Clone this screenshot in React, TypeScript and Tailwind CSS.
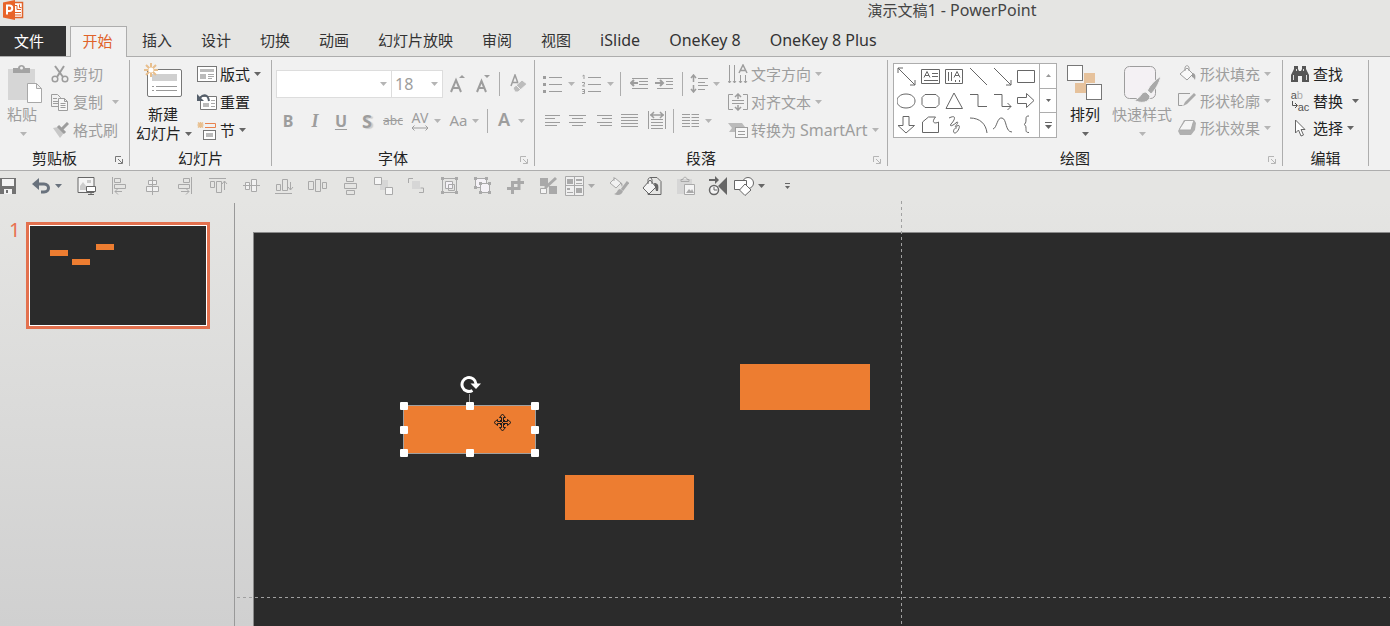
import type { ReactNode } from 'react'
import clsx from 'clsx'

type IconProps = { w: number; h: number; children: ReactNode; className?: string }

function Icon({ w, h, children, className }: IconProps) {
  return (
    <svg
      width={w}
      height={h}
      viewBox={`0 0 ${w} ${h}`}
      fill="none"
      stroke="currentColor"
      className={clsx('shrink-0', className)}
      aria-hidden="true"
    >
      {children}
    </svg>
  )
}

function Caret({ className }: { className?: string }) {
  return (
    <Icon w={7} h={4} className={className}>
      <path d="M0 0h7L3.5 4z" fill="currentColor" stroke="none" />
    </Icon>
  )
}

function Group({
  label,
  launcher,
  className,
  inset,
  children,
}: {
  label: string
  launcher?: 'on' | 'off'
  className: string
  inset: string
  children: ReactNode
}) {
  return (
    <section
      aria-label={label}
      className={clsx('flex shrink-0 flex-col border-r border-[#adadad]', className)}
    >
      <div className={clsx('flex flex-1', inset)}>{children}</div>
      <div className="flex h-4 items-center">
        <span className="flex-1 text-center text-[#222]">{label}</span>
        {launcher && (
          <button
            aria-label={label + '设置'}
            className={clsx(
              'flex w-5 justify-center pt-1',
              launcher === 'on' ? 'text-[#777]' : 'text-[#b5b5b5]',
            )}
          >
            <Icon w={8} h={8}>
              <path d="M.5 6V.5H6M3 3l4 4M7.5 3v4.5H3" />
            </Icon>
          </button>
        )}
      </div>
    </section>
  )
}

function RowButton({
  icon,
  label,
  caret,
  active,
  className,
}: {
  icon: ReactNode
  label: ReactNode
  caret?: 'near' | 'far'
  active?: boolean
  className: string
}) {
  return (
    <button
      className={clsx(
        'flex items-center whitespace-nowrap',
        active ? 'text-[#222]' : 'text-[#9d9d9d]',
        className,
      )}
    >
      <span className="flex w-5 justify-center">{icon}</span>
      <span className="pl-[3px]">{label}</span>
      {caret && (
        <Caret
          className={clsx(
            caret === 'near' ? 'ml-1' : 'ml-[9px]',
            active ? 'text-[#666]' : 'text-[#b5b5b5]',
          )}
        />
      )}
    </button>
  )
}

function Divider() {
  return <span className="h-6 w-px bg-[#adadad]" />
}

const tabs = ['插入', '设计', '切换', '动画', '幻灯片放映', '审阅', '视图']
const addInTabs = ['iSlide', 'OneKey 8', 'OneKey 8 Plus']

function TitleBar() {
  return (
    <header className="flex h-[26px] items-start">
      <Icon w={24} h={21} className="ml-[2px]">
        <rect x="10" y="2.5" width="10.5" height="15" fill="#fff" stroke="#e0622a" strokeWidth="1.5" />
        <path d="M13 5.5h2v4h4M13 12.5h6M13 15h6M17.5 4.5v3h2" stroke="#e0622a" />
        <path d="M1 2.5L13 0v20L1 17.5z" fill="#e8642a" stroke="none" />
        <path d="M5 14.5v-9h2.5a2.5 2.5 0 0 1 0 5.5H5" stroke="#fff" strokeWidth="2" />
      </Icon>
      <h1 className="ml-[496px] flex-1 pr-2 text-center text-[#444] max-lg:ml-0">
        演示文稿<span className="text-base leading-5">1 - PowerPoint</span>
      </h1>
    </header>
  )
}

function TabBar() {
  return (
    <nav className="flex h-[31px] border-b border-[#adadad]">
      <a href="#file" className="mr-1 flex w-[66px] items-center bg-[#333] pb-px pl-[14px] text-white">
        文件
      </a>
      <a
        href="#home"
        className="-mb-px flex w-[57px] items-center justify-center border border-b-0 border-[#adadad] bg-[#f1f1f1] pb-[3px] pr-[2px] text-[#e0622a]"
      >
        开始
      </a>
      <div className="ml-[15px] flex items-center gap-[29px] whitespace-nowrap pb-[2px] text-[#333]">
        {tabs.map((tab) => (
          <a key={tab} href={'#' + tab}>
            {tab}
          </a>
        ))}
        {addInTabs.map((tab) => (
          <a key={tab} href={'#' + tab} className="text-base leading-5">
            {tab}
          </a>
        ))}
      </div>
    </nav>
  )
}

function ClipboardGroup() {
  return (
    <Group label="剪贴板" launcher="on" className="w-[130px]" inset="pl-[7px]">
      <button className="flex w-[35px] flex-col items-start pt-[5px] text-[#9d9d9d]">
        <Icon w={35} h={39}>
          <path d="M1 4h27v31H1z" fill="#d6d6d6" stroke="none" />
          <path d="M6 3h5c0-4 7-4 7 0h5v5H6z" fill="#a3a3a3" stroke="none" />
          <circle cx="14.5" cy="3" r="1.5" fill="#f1f1f1" stroke="none" />
          <path d="M20.5 18.5h9l5 5v14h-14zM29.5 18.5v5h5" fill="#fff" stroke="#a8a8a8" />
        </Icon>
        <span className="leading-5">粘贴</span>
        <Caret className="ml-[13px] mt-2 text-[#b5b5b5]" />
      </button>
      <div className="ml-2 flex flex-col">
        <RowButton
          className="h-7"
          label="剪切"
          icon={
            <Icon w={18} h={18}>
              <path d="M4 1l8 11M13 1L6 12" strokeWidth="2" />
              <circle cx="4" cy="14" r="2.8" strokeWidth="1.5" />
              <circle cx="14" cy="14" r="2.8" strokeWidth="1.5" />
            </Icon>
          }
        />
        <RowButton
          className="h-7"
          label="复制"
          caret="far"
          icon={
            <Icon w={18} h={18}>
              <path d="M.5 1.5h6l3 3v9h-9zM2 5.5h4M2 8.5h5M2 10.5h5" />
              <path d="M7.5 5.5h6l3 3v9h-9zM13.5 5.5v3h3M9.5 10.5h5M9.5 12.5h5M9.5 14.5h5" fill="#f7f7f7" />
            </Icon>
          }
        />
        <RowButton
          className="h-7"
          label="格式刷"
          icon={
            <Icon w={17} h={16}>
              <path d="M1 6l5-1 6 6-4 5z" fill="#c8c8c8" stroke="none" />
              <path d="M6 4l7 7M10 7l6-6" strokeWidth="3" />
            </Icon>
          }
        />
      </div>
    </Group>
  )
}

function SlidesGroup() {
  return (
    <Group label="幻灯片" className="w-[142px]" inset="pl-[6px]">
      <button className="flex w-[57px] flex-col items-start pt-[2px] text-[#222]">
        <Icon w={40} h={37} className="ml-[7px]">
          <rect x="4.5" y="7.5" width="34" height="27" rx="1.5" fill="#fff" stroke="#777" />
          <path d="M9 12h25v7H9z" fill="#d0d0d0" stroke="none" />
          <path d="M9 24.5h2M13 24.5h21M9 28.5h2M13 28.5h21" stroke="#999" />
          <path d="M8 1v14M1 8h14M3 3l10 10M13 3L3 13" stroke="#e8bf8e" strokeWidth="2" />
          <circle cx="8" cy="8" r="2.5" fill="#fff" stroke="none" />
        </Icon>
        <span className="mt-[6px] pl-3 leading-[19px]">新建</span>
        <span className="flex items-center whitespace-nowrap leading-[19px]">
          幻灯片
          <Caret className="ml-1 text-[#666]" />
        </span>
      </button>
      <div className="ml-1 flex flex-col">
        <RowButton
          active
          className="h-7"
          label="版式"
          caret="near"
          icon={
            <Icon w={20} h={16} className="text-[#777]">
              <rect x=".5" y=".5" width="19" height="15" fill="#fff" />
              <path d="M3 3h14v3H3zM3 8h6v5H3z" fill="#bbb" stroke="none" />
              <path d="M11 8.5h6M11 10.5h6M11 12.5h4" stroke="#aaa" />
            </Icon>
          }
        />
        <RowButton
          active
          className="h-7"
          label="重置"
          icon={
            <Icon w={20} h={18} className="text-[#777]">
              <path d="M3.5 3.5h16v13h-16z" fill="#fff" />
              <path d="M6 10h6v4H6z" fill="#bbb" stroke="none" />
              <path d="M14 7.5h4M14 10.5h4M14 13.5h4" stroke="#aaa" />
              <path d="M3 5c4-5 8-3 9 3" stroke="#555f6b" strokeWidth="2" />
              <path d="M0 1v7h7z" fill="#555f6b" stroke="none" />
            </Icon>
          }
        />
        <RowButton
          active
          className="h-7"
          label="节"
          caret="near"
          icon={
            <Icon w={20} h={19}>
              <path d="M3.5 1v6M.5 4h6M1 1.5l5 5M6 1.5l-5 5" stroke="#e8bf8e" strokeWidth="1.5" />
              <path d="M8 2.5h10.500v4H8" stroke="#e8834f" />
              <rect x="6.5" y="9.5" width="12" height="9" fill="#fff" stroke="#777" />
              <path d="M9 12h7v4H9z" fill="#bbb" stroke="none" />
            </Icon>
          }
        />
      </div>
    </Group>
  )
}

function FontGroup() {
  return (
    <Group label="字体" launcher="off" className="w-[263px]" inset="pl-1 pt-[5px]">
      <div className="flex flex-col text-[#9d9d9d]">
        <div className="flex h-[37px] items-center">
          <div className="flex h-7 w-[116px] items-center border border-[#ddd] bg-white">
            <input aria-label="字体名称" className="w-full min-w-0 flex-1 bg-transparent pl-1 outline-none" />
            <Caret className="mr-1 text-[#b5b5b5]" />
          </div>
          <div className="-ml-px flex h-7 w-[52px] items-center border border-[#ddd] bg-white">
            <input
              aria-label="字号"
              defaultValue="18"
              className="w-full min-w-0 flex-1 bg-transparent pl-[3px] text-base outline-none"
            />
            <Caret className="mr-1 text-[#b5b5b5]" />
          </div>
          <button aria-label="增大字号" className="ml-[7px]">
            <Icon w={16} h={18}>
              <path d="M1 17L6 5l5 12M3 13h6" strokeWidth="2" />
              <path d="M9 3h6l-3-3z" fill="currentColor" stroke="none" />
            </Icon>
          </button>
          <button aria-label="减小字号" className="ml-[10px] mr-2">
            <Icon w={15} h={18}>
              <path d="M1 17L5.5 6 10 17M2.5 13h6" strokeWidth="2" />
              <path d="M8 0h6l-3 3z" fill="currentColor" stroke="none" />
            </Icon>
          </button>
          <Divider />
          <button aria-label="清除格式" className="ml-[10px]">
            <Icon w={17} h={19}>
              <path d="M1 12L5 1l4 11M2.5 8.500h5" strokeWidth="1.5" />
              <path d="M3 14l9-8 5 4-9 8H5z" fill="#bcbcbc" stroke="#f1f1f1" />
              <path d="M6 11l5 5" stroke="#f1f1f1" />
            </Icon>
          </button>
        </div>
        <div className="flex h-[37px] items-center text-base">
          <button className="w-6 font-bold">B</button>
          <button className="ml-[2px] w-[26px] font-['Liberation_Serif',serif] text-lg font-bold italic">I</button>
          <button className="w-[26px] font-bold underline underline-offset-2">U</button>
          <button className="w-[26px] text-lg font-bold [text-shadow:2px_1px_1px_#ccc]">S</button>
          <button className="w-[26px] text-xs line-through">abc</button>
          <button className="flex w-[39px] items-center justify-center gap-1">
            <span className="flex w-[20px] flex-col items-center">
              <span className="text-sm leading-[14px]">AV</span>
              <Icon w={18} h={6}>
                <path d="M1 3h16M3.5 .5L1 3l2.5 2.5M14.5 .5L17 3l-2.5 2.500" />
              </Icon>
            </span>
            <Caret className="text-[#b5b5b5]" />
          </button>
          <button className="flex w-[38px] items-center justify-center gap-1 text-[15px]">
            Aa
            <Caret className="text-[#b5b5b5]" />
          </button>
          <span className="ml-1" />
          <Divider />
          <button className="ml-[10px] flex items-center gap-2">
            <span className="pb-1 text-lg font-semibold leading-6">A</span>
            <Caret className="text-[#b5b5b5]" />
          </button>
        </div>
      </div>
    </Group>
  )
}

function ParagraphGroup() {
  return (
    <Group label="段落" launcher="off" className="w-[353px]" inset="pl-2">
      <div className="flex w-[185px] flex-col pt-[5px] text-[#9d9d9d]">
        <div className="flex h-[37px] items-center">
          <button aria-label="项目符号" className="flex w-[39px] items-center gap-[6px]">
            <Icon w={19} h={18}>
              <path d="M6 2.5h13M6 9.5h13M6 16.5h13" />
              <path d="M0 2.5h3M0 9.5h3M0 16.5h3" strokeWidth="3" />
            </Icon>
            <Caret className="text-[#b5b5b5]" />
          </button>
          <button aria-label="编号" className="flex w-[38px] items-center gap-[6px]">
            <Icon w={19} h={20}>
              <path d="M6 3.5h13M6 10.5h13M6 17.5h13" />
              <path d="M.5 2L2 1v4M0 8.5h2.5V10L.5 12H3M0 15.5h2.5v4H0M.5 17.5h2" />
            </Icon>
            <Caret className="text-[#b5b5b5]" />
          </button>
          <Divider />
          <button aria-label="减少缩进" className="ml-[9px] w-[25px]">
            <Icon w={18} h={13}>
              <path d="M2 1.5h16M9 4.5h9M9 7.5h9M2 11.5h16" />
              <path d="M8 6H1M4 3L1 6l3 3" strokeWidth="2" />
            </Icon>
          </button>
          <button aria-label="增加缩进" className="w-[27px]">
            <Icon w={19} h={13}>
              <path d="M2 1.5h16M11 4.5h7M11 7.5h7M2 11.5h16" />
              <path d="M0 6h8M5 3l3 3-3 3" strokeWidth="2" />
            </Icon>
          </button>
          <Divider />
          <button aria-label="行距" className="ml-[7px] flex items-center gap-[5px]">
            <Icon w={18} h={19}>
              <path d="M8 4.5h10M8 8.5h7M8 11.5h10M8 15.5h7" />
              <path d="M3.5 1v7M1 4l2.5-3L6 4M3.5 11v7M1 15l2.5 3L6 15" strokeWidth="1.5" />
            </Icon>
            <Caret className="text-[#b5b5b5]" />
          </button>
        </div>
        <div className="flex h-[37px] items-center">
          <button aria-label="左对齐" className="w-[26px] pl-[2px]">
            <Icon w={15} h={12}>
              <path d="M0 .5h15M0 3.5h10M0 7.5h15M0 10.5h12" />
            </Icon>
          </button>
          <button aria-label="居中" className="w-[26px]">
            <Icon w={17} h={12}>
              <path d="M0 .5h17M3 3.5h11M0 7.5h17M3 10.5h11" />
            </Icon>
          </button>
          <button aria-label="右对齐" className="w-[26px] pl-[2px]">
            <Icon w={15} h={12}>
              <path d="M0 .5h15M5 3.5h10M0 7.5h15M3 10.5h12" />
            </Icon>
          </button>
          <button aria-label="两端对齐" className="w-[27px]">
            <Icon w={17} h={13}>
              <path d="M0 .5h17M0 3.5h17M0 6.5h17M0 9.5h17M0 12.5h17" />
            </Icon>
          </button>
          <button aria-label="分散对齐" className="w-[25px]">
            <Icon w={18} h={19}>
              <path d="M.5 0v18M17.5 0v18M3 8.5h12M3 11.5h12M3 14.5h12M3 17.5h12" />
              <path d="M2 4h14M6 1L3 4l3 3M12 1l3 3-3 3" strokeWidth="1.5" />
            </Icon>
          </button>
          <Divider />
          <button aria-label="分栏" className="ml-2 flex items-center gap-[6px]">
            <Icon w={17} h={13}>
              <path d="M0 .5h8M9.5 .5H17M0 3.5h8M9.5 3.5H17M0 6.5h8M9.5 6.5H17M0 9.5h8M9.5 9.5H17M0 12.5h8M9.5 12.5H17" />
            </Icon>
            <Caret className="text-[#b5b5b5]" />
          </button>
        </div>
      </div>
      <div className="flex flex-col">
        <RowButton
          className="h-7"
          label="文字方向"
          caret="near"
          icon={
            <Icon w={20} h={20}>
              <path d="M1.5 1v18M6.5 1v18M12.5 11v8M17.5 11v8M0 17l1.5 2L3 17M5 17l1.5 2L8 17M11 17l1.5 2 1.5-2M16 17l1.5 2 1.5-2" />
              <path d="M11 9l4-8 4 8M12 6.5h6" strokeWidth="1.5" />
            </Icon>
          }
        />
        <RowButton
          className="h-7"
          label="对齐文本"
          caret="near"
          icon={
            <Icon w={20} h={18}>
              <path d="M5 1.5H.5v15H5M15 1.5h4.5v15H15M4 7.5h12M4 10.5h12" />
              <path d="M10 1v5M7 4l3-3 3 3M10 12v5M7 14l3 3 3-3" strokeWidth="1.5" />
            </Icon>
          }
        />
        <RowButton
          className="h-7"
          label={
            <>
              转换为 <span className="text-base leading-5">SmartArt</span>
            </>
          }
          caret="near"
          icon={
            <Icon w={20} h={16}>
              <path d="M0 1h14l3 4H8v5H1l3-4z" fill="#bbb" stroke="none" />
              <rect x="7.5" y="5.5" width="12" height="10" fill="#f7f7f7" />
              <path d="M10 9.5h7M10 12.5h7" />
            </Icon>
          }
        />
      </div>
    </Group>
  )
}

const shapes = [
  'M1 1l17 17M1 6V1h5M18 13v5h-5',
  'M.5 2.5h18v14H.5zM3 10.5l3-6 3 6M4 8.5h4M11 6.5h6M11 9.5h6M3 13.5h14',
  'M.5 2.5h17v14H.5zM3.5 5v9M6.5 5v9M9 10.5l3-6 3 6M10 8.5h4M10.5 13v2M14.5 13v2',
  'M1 1l17 17',
  'M1 1l17 17M18 13v5h-5',
  'M.5 3.5h17v12H.5z',
  'M9 3c12 0 12 14 0 14S-3 3 9 3z',
  'M4 3.5h11l3 3v7l-3 3H4l-3-3v-7z',
  'M9 2l8.5 15.5H1z',
  'M1 3.5h8v12h9',
  'M1 3.5h8v12h9M14.5 12l3.5 3.5-3.5 3.5',
  'M.5 6.5h9v-4l7.5 7-7.5 7v-4h-9z',
  'M6 1.5h6v9h5.5L9 18l-8-7.5h5z',
  'M1.5 17.5V7l6-5h7c-5 6 0 7 3 5v10.500z',
  'M4 3c8-4 6 2 2 6-2 3 2 2 6-2 3 0-5 7 0 4s1 7-2 7-1-6 2-5',
  'M1 3c10 0 16 6 17 15',
  'M0 14c4-1 4-12 9-11s3 14 10 14',
  'M12 1c-3 0-3 1-3 4s-1 4-2 4.5c1 .5 2 1 2 4s0 4 3 4',
]

function LargeCommand({
  icon,
  label,
  active,
  className,
}: {
  icon: ReactNode
  label: string
  active?: boolean
  className: string
}) {
  return (
    <button
      className={clsx(
        'flex flex-col items-center whitespace-nowrap pt-[5px]',
        active ? 'text-[#222]' : 'text-[#9d9d9d]',
        className,
      )}
    >
      {icon}
      <span className="leading-5">{label}</span>
      <Caret className={clsx('mt-2', active ? 'text-[#666]' : 'text-[#b5b5b5]')} />
    </button>
  )
}

function DrawingGroup() {
  return (
    <Group label="绘图" launcher="off" className="w-[395px]" inset="pl-[5px]">
      <div className="mt-[3px] flex h-[75px] w-[164px] shrink-0 border border-[#adadad] bg-white text-[#666]">
        <div className="grid flex-1 grid-cols-6 place-items-center">
          {shapes.map((d, i) => (
            <button key={i} aria-label={`形状 ${i + 1}`}>
              <Icon w={19} h={19}>
                <path d={d} />
              </Icon>
            </button>
          ))}
        </div>
        <div className="flex w-[17px] flex-col divide-y divide-[#adadad] border-l border-[#adadad]">
          <button aria-label="上一行" className="flex flex-1 items-center justify-center">
            <Icon w={5} h={3} className="text-[#999]">
              <path d="M0 3h5L2.5 0z" fill="currentColor" stroke="none" />
            </Icon>
          </button>
          <button aria-label="下一行" className="flex flex-1 items-center justify-center">
            <Icon w={5} h={3}>
              <path d="M0 0h5L2.5 3z" fill="currentColor" stroke="none" />
            </Icon>
          </button>
          <button aria-label="其他" className="flex flex-1 items-center justify-center">
            <Icon w={7} h={7}>
              <path d="M0 .5h7" />
              <path d="M0 3h7L3.5 7z" fill="currentColor" stroke="none" />
            </Icon>
          </button>
        </div>
      </div>
      <LargeCommand
        active
        className="ml-2 w-[40px]"
        label="排列"
        icon={
          <Icon w={36} h={39}>
            <path d="M17 8h11v10H17zM8 18h11v10H8z" fill="#e6c29c" stroke="none" />
            <rect x=".5" y=".5" width="15" height="15" fill="#fff" stroke="#777" />
            <rect x="19.5" y="19.5" width="15" height="15" fill="#fff" stroke="#777" />
          </Icon>
        }
      />
      <LargeCommand
        className="ml-1 w-[66px]"
        label="快速样式"
        icon={
          <Icon w={38} h={39}>
            <rect x="1.5" y="1.5" width="31" height="32" rx="5" fill="#f4f1f4" />
            <path
              d="M38 11c-6 4-11 9-14 15l4 3c4-4 8-10 10-18zM23 27c-6 0-4 6-12 8 6 4 16 3 16-4z"
              fill="#a9a9a9"
              stroke="#f1f1f1"
            />
            <path d="M22 24l7 7" stroke="#f1f1f1" strokeWidth="2" />
          </Icon>
        }
      />
      <div className="ml-[2px] flex flex-col">
        <RowButton
          className="h-[27px]"
          label="形状填充"
          caret="near"
          icon={
            <Icon w={18} h={18}>
              <path d="M2 9l7-6 6 6-6 6zM7 6V3c0-3 4-3 4 0v3" fill="#f9f9f9" />
              <path d="M14 8c3 0 4 2 3 7-1-2-2-3-3-3z" fill="currentColor" stroke="none" />
            </Icon>
          }
        />
        <RowButton
          className="h-[27px]"
          label="形状轮廓"
          caret="near"
          icon={
            <Icon w={20} h={17}>
              <path d="M13 1.5H1.5v12h4" />
              <path d="M6 14l2-4 9-9 2 2-9 9z" fill="#aaa" stroke="none" />
            </Icon>
          }
        />
        <RowButton
          className="h-[27px]"
          label="形状效果"
          caret="near"
          icon={
            <Icon w={19} h={17}>
              <path d="M6 1h10l2 3-1 7-4 5H2L0 12z" fill="#b0b0b0" stroke="none" />
              <path d="M7 1.5h7.5q1 0 1 1L13 11H2.5q-1 0-1-1z" fill="#f5f5f5" stroke="#aaa" />
            </Icon>
          }
        />
      </div>
    </Group>
  )
}

function EditingGroup() {
  return (
    <Group label="编辑" className="w-[86px]" inset="pl-[7px]">
      <div className="flex flex-col">
        <RowButton
          active
          className="h-[27px]"
          label="查找"
          icon={
            <Icon w={18} h={17} className="text-[#555]">
              <path d="M3 1h4v3l1 2h2l1-2V1h4v3l3 6v7h-7v-6H7v6H0v-7l3-6z" fill="currentColor" stroke="none" />
              <path d="M2.5 10v5M5.5 4v2M12.5 4v2M15.5 10v5" stroke="#ddd" />
            </Icon>
          }
        />
        <RowButton
          active
          className="h-[27px]"
          label="替换"
          caret="far"
          icon={
            <span className="flex flex-col text-left font-['Liberation_Sans',sans-serif] text-[11px] leading-3 text-[#555]">
              <span>
                a<span className="text-[#aaa]">b</span>
              </span>
              <span className="flex">
                <Icon w={7} h={8}>
                  <path d="M1.5 0v4.5H6M4 2l2.5 2.5L4 7" />
                </Icon>
                ac
              </span>
            </span>
          }
        />
        <RowButton
          active
          className="h-[27px]"
          label="选择"
          caret="near"
          icon={
            <Icon w={12} h={18} className="text-[#666]">
              <path d="M1.5 1v13l3-3 2.5 6 2.5-1L7 10.5h4z" fill="#fff" />
            </Icon>
          }
        />
      </div>
    </Group>
  )
}

const quickTools: { label: string; active?: boolean; art: ReactNode }[] = [
  {
    label: '图片',
    active: true,
    art: (
      <>
        <path d="M1 1.5h16v15H1z" fill="#f5f5f5" />
        <path d="M3 10l3-4 3 4v4H3zM10 4h4v3h-4z" fill="#ccc" stroke="none" />
        <path d="M9.5 10.5h9v5h-9zM14 16v3M11 18.5h6" fill="#fff" />
      </>
    ),
  },
  { label: '左对齐', art: <path d="M2.5 1v17M4.5 2.5h6v4h-6zM4.5 8.5h11v4h-11zM12 15.5H5M8 12.5l-3 3 3 3" /> },
  { label: '水平居中', art: <path d="M9.5 1v18M5.5 4.5h8v4h-8zM3.5 10.5h12v5h-12z" fill="#f1f1f1" /> },
  { label: '右对齐', art: <path d="M15.5 1v17M7.5 2.5h6v4h-6zM2.5 8.5h11v4h-11zM5 15.5h8M10 12.5l3 3-3 3" /> },
  { label: '顶端对齐', art: <path d="M0 2.5h17M1.5 5.5h4v6h-4zM7.5 5.5h5v11h-5zM15.5 14V5M13 8l2.5-3L18 8" /> },
  { label: '垂直居中', art: <path d="M1 9.5h17M3.5 6.5h4v7h-4zM9.5 3.5h5v12h-5z" fill="#f1f1f1" /> },
  { label: '底端对齐', art: <path d="M0 17.5h17M1.5 8.5h4v6h-4zM7.5 3.5h5v11h-5zM15.5 6v8M13 11l2.5 3 2.5-3" /> },
  { label: '横向分布', art: <path d="M.5 5.5h5v8h-5zM7.5 3.5h5v12h-5zM14.5 6.5h4v6h-4z" /> },
  { label: '纵向分布', art: <path d="M5.5 1.5h7v4h-7zM3.5 7.5h12v5h-12zM5.5 14.5h8v4h-8z" /> },
  {
    label: '上移一层',
    art: (
      <>
        <path d="M6 4h8v10H6z" fill="#d6d6d6" stroke="none" />
        <path d="M.5 1.5h7v7h-7zM11.5 11.5h7v7h-7z" fill="#f6f6f6" />
      </>
    ),
  },
  {
    label: '下移一层',
    art: (
      <>
        <path d="M5 5h8v8H5z" fill="#d6d6d6" stroke="none" />
        <path d="M6 2.5H1.5V7M12 16.5h4.5V12h-3" />
      </>
    ),
  },
  {
    label: '组合',
    art: (
      <>
        <path d="M2.5 2.5h14v14h-14z" />
        <path d="M5.5 5.5h7v7h-7z" fill="#f4f1f6" />
        <path d="M8.5 8.5h6v6h-6z" />
        <path d="M1 1h3v3H1zM15 1h3v3h-3zM1 15h3v3H1zM15 15h3v3h-3z" fill="currentColor" stroke="none" />
      </>
    ),
  },
  {
    label: '取消组合',
    art: (
      <>
        <path d="M2.5 2.5h11v9h-11z" fill="#f4f1f6" />
        <path d="M7.5 7.5h9v9h-9z" fill="#f4f1f6" />
        <path
          d="M1 1h3v3H1zM12 1h3v3h-3zM1 10h3v3H1zM6 6h3v3H6zM15 6h3v3h-3zM6 15h3v3H6zM15 15h3v3h-3z"
          fill="currentColor"
          stroke="none"
        />
      </>
    ),
  },
  { label: '裁剪', art: <path d="M18 6.5H6.5V18M13 2v10.5H1" strokeWidth="3" /> },
  {
    label: '合并形状',
    art: (
      <>
        <path d="M1 2h8v8H1zM10 10h8v8h-8z" fill="currentColor" stroke="none" />
        <path d="M1.5 12.5h6v5h-6z" fill="#f4f4f4" />
        <path d="M17 2L6 12" strokeWidth="3" />
      </>
    ),
  },
]

const quickToolsEnd: { label: string; active?: boolean; art: ReactNode }[] = [
  {
    label: '填充格式',
    art: (
      <>
        <path d="M1 7l5-5 6 5-5 5zM5 5V1" fill="#f1f1f1" />
        <path d="M19 6l-6 8" strokeWidth="3" />
        <path d="M11 13c-3 0-2 4-6 5 4 2 8 1 9-3zM11 6c3 1 3 3 2 5z" fill="currentColor" stroke="none" />
      </>
    ),
  },
  {
    label: '背景格式',
    active: true,
    art: (
      <>
        <path d="M8 1.5h7l4 4v13H6v-4" />
        <path d="M1 12l7-8 6 7-7 7zM6 8V4c0-3 4-3 4 0v4" fill="#f4f4f4" />
        <path d="M12 7c4 0 5 2 4 8h-2z" fill="currentColor" stroke="none" />
      </>
    ),
  },
  {
    label: '粘贴图片',
    art: (
      <>
        <path d="M2 3h15v15H2z" fill="#d6d6d6" stroke="none" />
        <path d="M6 3.5h2c0-3 4-3 4 0h2v2H6z" />
        <path d="M9.5 8.5h10v10h-10z" fill="#f4f4f4" />
        <path d="M11 17l3-4 2 2 1-2 2 4z" fill="currentColor" stroke="none" />
      </>
    ),
  },
  {
    label: '动画计时',
    active: true,
    art: (
      <>
        <path d="M19 1v18l-9-9zM1 3h6V0l4 4-4 4V5H1z" fill="currentColor" stroke="none" />
        <circle cx="6" cy="14" r="4.5" fill="#f4f4f4" strokeWidth="1.5" />
        <path d="M6 11v3h3" />
      </>
    ),
  },
]

function QuickTool({ label, active, art }: { label: string; active?: boolean; art: ReactNode }) {
  return (
    <button
      aria-label={label}
      className={clsx('flex w-[33px] justify-center', active ? 'text-[#666]' : 'text-[#a9a9a9]')}
    >
      <Icon w={20} h={20}>
        {art}
      </Icon>
    </button>
  )
}

function QuickAccessBar() {
  return (
    <div className="flex h-[30px] items-center text-[#666]">
      <button aria-label="保存">
        <Icon w={16} h={16}>
          <path d="M0 0h16v16H0z" fill="#737373" stroke="none" />
          <path d="M2 1h12v7H2zM4 11h8v5H4z" fill="#f4f4f4" stroke="none" />
          <path d="M6 12h2v3H6z" fill="#737373" stroke="none" />
        </Icon>
      </button>
      <button aria-label="撤消" className="ml-4 flex w-[38px] items-center gap-1 text-[#69727d]">
        <Icon w={19} h={16}>
          <path d="M4 6h8c6 0 6 8 0 8H9" strokeWidth="3" />
          <path d="M0 6l7-6v12z" fill="currentColor" stroke="none" />
        </Icon>
        <Caret />
      </button>
      {quickTools.map((tool) => (
        <QuickTool key={tool.label} {...tool} />
      ))}
      <button aria-label="版式库" className="flex w-[37px] items-center gap-1 text-[#a9a9a9]">
        <Icon w={19} h={20}>
          <path d="M.5.5h18v19H.5z" fill="#efefef" />
          <path d="M9.5 0v20M0 9.5h19" />
          <path d="M2 3h6v5H2zM11 3h6v2h-6zM2 12h3v2H2zM11 12h6v5h-6z" fill="currentColor" stroke="none" />
          <path d="M11 7.5h6M2 16.5h6" />
        </Icon>
        <Caret />
      </button>
      {quickToolsEnd.map((tool) => (
        <QuickTool key={tool.label} {...tool} />
      ))}
      <button aria-label="形状" className="flex items-center gap-1">
        <Icon w={20} h={19}>
          <circle cx="14" cy="6" r="5.5" fill="#fff" />
          <path d="M.5 3.5h12v9H.5z" fill="#fff" />
          <path d="M11 7l6 6-6 5.5L5.5 13z" fill="#fff" />
        </Icon>
        <Caret />
      </button>
      <button aria-label="自定义快速访问工具栏" className="ml-5">
        <Icon w={5} h={6}>
          <path d="M0 .5h5" />
          <path d="M0 3h5L2.5 6z" fill="currentColor" stroke="none" />
        </Icon>
      </button>
    </div>
  )
}

function SlidePanel() {
  return (
    <aside className="mt-[2px] flex w-[235px] shrink-0 items-start border-r border-[#999] pl-[9px] pt-[19px]">
      <span className="w-[17px] text-xl leading-4 text-[#e8704f]">1</span>
      <button
        aria-label="幻灯片 1"
        className="relative h-[107px] w-[184px] border-[3px] border-[#e3714f] bg-[#2b2b2b] shadow-[inset_0_0_0_1px_#fff]"
      >
        <span className="absolute left-[21px] top-[25px] h-[6px] w-[18px] bg-[#ed7d31]" />
        <span className="absolute left-[43px] top-[34px] h-[6px] w-[18px] bg-[#ed7d31]" />
        <span className="absolute left-[67px] top-[19px] h-[6px] w-[18px] bg-[#ed7d31]" />
      </button>
    </aside>
  )
}

const handles = [
  'left-0 top-0',
  'left-1/2 top-0',
  'left-full top-0',
  'left-0 top-1/2',
  'left-full top-1/2',
  'left-0 top-full',
  'left-1/2 top-full',
  'left-full top-full',
]

function SelectedShape() {
  return (
    <div className="absolute left-[149px] top-[172px] h-[49px] w-[133px] border border-[#a0a0a0] bg-[#ed7d31]">
      <span className="absolute -top-3 left-[65px] h-3 w-px bg-[#a0a0a0]" />
      <Icon w={22} h={18} className="absolute -top-[31px] left-[56px] text-white">
        <path d="M12.5 15.5A7 7 0 1 1 16 9" strokeWidth="3" />
        <path d="M10.5 8.5H21l-5 5.5z" fill="currentColor" stroke="none" />
      </Icon>
      {handles.map((place) => (
        <span
          key={place}
          className={clsx('absolute size-2 -translate-x-1/2 -translate-y-1/2 rounded-[1px] bg-white', place)}
        />
      ))}
      <Icon w={19} h={19} className="absolute left-[89px] top-[7px] text-[#1d1d1d]">
        <path
          d="M9.5 1l3 3.5h-2v4h4v-2l3.5 3-3.5 3v-2h-4v4h2l-3 3.5-3-3.5h2v-4h-4v2L1 9.5l3.5-3v2h4v-4h-2z"
          fill="#ed7d31"
        />
        <path d="M7 7l5 5M12 7l-5 5" />
      </Icon>
    </div>
  )
}

function Canvas() {
  return (
    <main className="relative flex min-w-0 flex-1 overflow-hidden pl-[18px] pt-[31px]">
      <div className="relative flex-1 border-l border-t border-[#8a8a8a] bg-[#2b2b2b]">
        <SelectedShape />
        <div className="absolute left-[311px] top-[242px] h-[45px] w-[129px] bg-[#ed7d31]" />
        <div className="absolute left-[486px] top-[131px] h-[46px] w-[130px] bg-[#ed7d31]" />
      </div>
      {/* drawing guides */}
      <span className="absolute bottom-0 left-[666px] top-0 w-px bg-[repeating-linear-gradient(to_bottom,#a0a0a0_0_3px,transparent_3px_6px)]" />
      <span className="absolute left-[2px] right-0 top-[396px] h-px bg-[repeating-linear-gradient(to_right,#a0a0a0_0_3px,transparent_3px_6px)]" />
    </main>
  )
}

export default function App() {
  return (
    <div className="flex min-h-screen flex-col overflow-hidden bg-[#e5e5e3] font-['Noto_Sans','Noto_Sans_CJK_SC',sans-serif] text-[15px] leading-5">
      <TitleBar />
      <TabBar />
      <div className="flex h-[114px] border-b border-[#adadad] bg-[#f1f1f1] pb-1 pt-[3px]">
        <ClipboardGroup />
        <SlidesGroup />
        <FontGroup />
        <ParagraphGroup />
        <DrawingGroup />
        <EditingGroup />
      </div>
      <QuickAccessBar />
      <div className="flex flex-1 bg-linear-to-b from-[#e5e5e3] to-[#d0d0d0]">
        <SlidePanel />
        <Canvas />
      </div>
    </div>
  )
}
